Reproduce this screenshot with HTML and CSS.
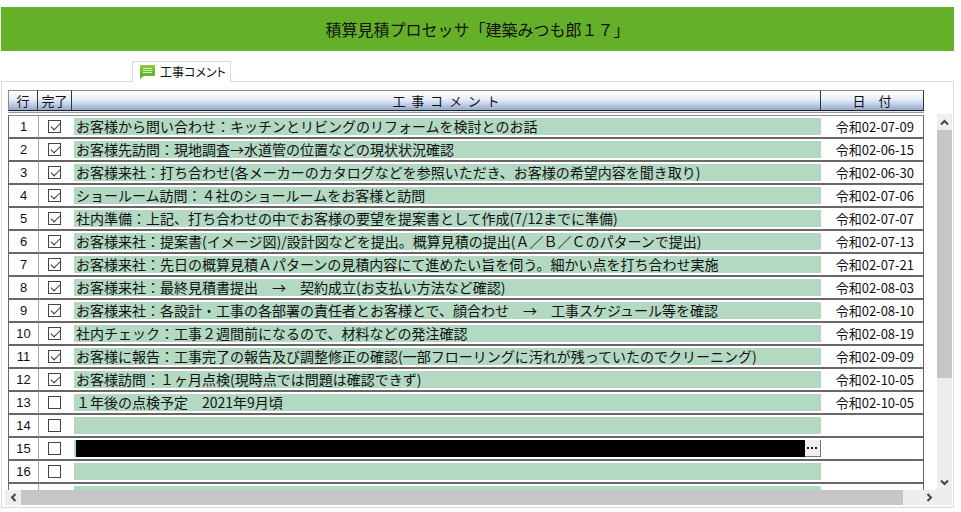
FILE: index.html
```html
<!DOCTYPE html>
<html lang="ja">
<head>
<meta charset="UTF-8">
<meta name="viewport" content="width=device-width, initial-scale=1.0">
<title>積算見積プロセッサ「建築みつも郎１７」</title>
<link rel="stylesheet" href="styles.css">
</head>
<body>
<h1 class="banner">積算見積プロセッサ「建築みつも郎１７」</h1>

<div class="tabs">
  <button type="button" class="tab">
    <svg class="tab-icon" width="16" height="16" viewBox="0 0 16 16" aria-hidden="true">
      <defs>
        <linearGradient id="bubble" x1="0" y1="0" x2="0" y2="1">
          <stop offset="0" stop-color="#8ccb3c"/>
          <stop offset="1" stop-color="#4fae2c"/>
        </linearGradient>
      </defs>
      <path d="M1 1h15v11H5L1 15z" fill="url(#bubble)"/>
      <path d="M4 4.500h9M4 6.500h9M4 8.500h9" stroke="#d4efb4" stroke-width="1"/>
    </svg>
    <span>工事コメント</span>
  </button>
</div>

<main class="panel">
  <div class="view">
    <table class="grid">
      <colgroup>
        <col class="col-no">
        <col class="col-done">
        <col>
        <col class="col-date">
      </colgroup>
      <thead>
        <tr>
          <th>行</th>
          <th>完了</th>
          <th>工&nbsp;&nbsp;事&nbsp;&nbsp;コ&nbsp;&nbsp;メ&nbsp;&nbsp;ン&nbsp;&nbsp;ト</th>
          <th>日　付</th>
        </tr>
      </thead>
      <tbody>
        <tr>
          <td class="no">1</td>
          <td class="done"><input type="checkbox" aria-label="1 完了" checked></td>
          <td class="comment"><div class="text">お客様から問い合わせ：キッチンとリビングのリフォームを検討とのお話</div></td>
          <td class="date">令和02-07-09</td>
        </tr>
        <tr>
          <td class="no">2</td>
          <td class="done"><input type="checkbox" aria-label="2 完了" checked></td>
          <td class="comment"><div class="text">お客様先訪問：現地調査→水道管の位置などの現状状況確認</div></td>
          <td class="date">令和02-06-15</td>
        </tr>
        <tr>
          <td class="no">3</td>
          <td class="done"><input type="checkbox" aria-label="3 完了" checked></td>
          <td class="comment"><div class="text">お客様来社：打ち合わせ(各メーカーのカタログなどを参照いただき、お客様の希望内容を聞き取り)</div></td>
          <td class="date">令和02-06-30</td>
        </tr>
        <tr>
          <td class="no">4</td>
          <td class="done"><input type="checkbox" aria-label="4 完了" checked></td>
          <td class="comment"><div class="text">ショールーム訪問：４社のショールームをお客様と訪問</div></td>
          <td class="date">令和02-07-06</td>
        </tr>
        <tr>
          <td class="no">5</td>
          <td class="done"><input type="checkbox" aria-label="5 完了" checked></td>
          <td class="comment"><div class="text">社内準備：上記、打ち合わせの中でお客様の要望を提案書として作成(7/12までに準備)</div></td>
          <td class="date">令和02-07-07</td>
        </tr>
        <tr>
          <td class="no">6</td>
          <td class="done"><input type="checkbox" aria-label="6 完了" checked></td>
          <td class="comment"><div class="text">お客様来社：提案書(イメージ図)/設計図などを提出。概算見積の提出(Ａ／Ｂ／Ｃのパターンで提出)</div></td>
          <td class="date">令和02-07-13</td>
        </tr>
        <tr>
          <td class="no">7</td>
          <td class="done"><input type="checkbox" aria-label="7 完了" checked></td>
          <td class="comment"><div class="text">お客様来社：先日の概算見積Ａパターンの見積内容にて進めたい旨を伺う。細かい点を打ち合わせ実施</div></td>
          <td class="date">令和02-07-21</td>
        </tr>
        <tr>
          <td class="no">8</td>
          <td class="done"><input type="checkbox" aria-label="8 完了" checked></td>
          <td class="comment"><div class="text">お客様来社：最終見積書提出　→　契約成立(お支払い方法など確認)</div></td>
          <td class="date">令和02-08-03</td>
        </tr>
        <tr>
          <td class="no">9</td>
          <td class="done"><input type="checkbox" aria-label="9 完了" checked></td>
          <td class="comment"><div class="text">お客様来社：各設計・工事の各部署の責任者とお客様とで、顔合わせ　→　工事スケジュール等を確認</div></td>
          <td class="date">令和02-08-10</td>
        </tr>
        <tr>
          <td class="no">10</td>
          <td class="done"><input type="checkbox" aria-label="10 完了" checked></td>
          <td class="comment"><div class="text">社内チェック：工事２週間前になるので、材料などの発注確認</div></td>
          <td class="date">令和02-08-19</td>
        </tr>
        <tr>
          <td class="no">11</td>
          <td class="done"><input type="checkbox" aria-label="11 完了" checked></td>
          <td class="comment"><div class="text">お客様に報告：工事完了の報告及び調整修正の確認(一部フローリングに汚れが残っていたのでクリーニング)</div></td>
          <td class="date">令和02-09-09</td>
        </tr>
        <tr>
          <td class="no">12</td>
          <td class="done"><input type="checkbox" aria-label="12 完了" checked></td>
          <td class="comment"><div class="text">お客様訪問：１ヶ月点検(現時点では問題は確認できず)</div></td>
          <td class="date">令和02-10-05</td>
        </tr>
        <tr>
          <td class="no">13</td>
          <td class="done"><input type="checkbox" aria-label="13 完了"></td>
          <td class="comment"><div class="text">１年後の点検予定　2021年9月頃</div></td>
          <td class="date">令和02-10-05</td>
        </tr>
        <tr>
          <td class="no">14</td>
          <td class="done"><input type="checkbox" aria-label="14 完了"></td>
          <td class="comment"><div class="text"></div></td>
          <td class="date"></td>
        </tr>
        <tr>
          <td class="no">15</td>
          <td class="done"><input type="checkbox" aria-label="15 完了"></td>
          <td class="comment">
            <div class="text editing">
              <input type="text" class="edit" aria-label="15 工事コメント">
              <button type="button" class="more" aria-label="参照">
                <svg width="11" height="3" viewBox="0 0 11 3" aria-hidden="true"><path d="M0 0h2v2H0zM4 0h2v2H4zM8 0h2v2H8z" fill="#111"/></svg>
              </button>
            </div>
          </td>
          <td class="date"></td>
        </tr>
        <tr>
          <td class="no">16</td>
          <td class="done"><input type="checkbox" aria-label="16 完了"></td>
          <td class="comment"><div class="text"></div></td>
          <td class="date"></td>
        </tr>
        <tr>
          <td class="no"></td>
          <td class="done"></td>
          <td class="comment"><div class="text"></div></td>
          <td class="date"></td>
        </tr>
      </tbody>
    </table>
  </div>

  <div class="vbar">
    <button type="button" class="arrow" aria-label="上へ">
      <svg width="9" height="7" viewBox="0 0 9 7"><path d="M1 5.500l3.500-3.500L8 5.500"/></svg>
    </button>
    <div class="vtrack"><div class="vthumb"></div></div>
    <button type="button" class="arrow" aria-label="下へ">
      <svg width="9" height="7" viewBox="0 0 9 7"><path d="M1 1.500l3.500 3.500L8 1.500"/></svg>
    </button>
  </div>

  <div class="hbar">
    <button type="button" class="arrow" aria-label="左へ">
      <svg width="7" height="9" viewBox="0 0 7 9"><path d="M5.500 1L2 4.500 5.500 8"/></svg>
    </button>
    <div class="htrack"><div class="hthumb"></div></div>
    <button type="button" class="arrow" aria-label="右へ">
      <svg width="7" height="9" viewBox="0 0 7 9"><path d="M1.500 1L5 4.500 1.500 8"/></svg>
    </button>
  </div>
</main>
</body>
</html>
```

FILE: styles.css
```css
* {
  box-sizing: border-box;
}
body {
  display: flex;
  flex-direction: column;
  height: 100vh;
  margin: 0;
  padding: 7px 7px 4px 1px;
  background-color: #fff;
  color: #111;
  font-family: "Noto Sans CJK JP", sans-serif;
  font-size: 14px;
}
button {
  padding: 0;
  border: none;
  color: inherit;
  font-family: inherit;
}

/* title and tab */
.banner {
  flex: none;
  margin: 0;
  background-color: #64b028;
  font-size: 16px;
  font-weight: normal;
  line-height: 44px;
  text-align: center;
}
.tabs {
  flex: none;
  padding: 10px 0 0 131px;
}
.tab {
  position: relative;
  display: flex;
  align-items: center;
  gap: 5px;
  height: 21px;
  margin-bottom: -1px;
  padding: 0 4px 0 6px;
  border: 1px solid #d9d9d9;
  border-bottom: none;
  background-color: #fff;
  font-size: 12px;
  line-height: 18px;
  font-feature-settings: "palt";
}

/* sheet */
.panel {
  flex: 1;
  display: grid;
  grid-template-columns: 1fr 15px;
  grid-template-rows: 1fr 15px;
  min-height: 0;
  padding: 8px 1px 2px 3px;
  border: 1px solid #d9d9d9;
}
.view {
  min-width: 0;
  min-height: 0;
  padding: 0 13px 0 3px;
  overflow: hidden;
}
.grid {
  width: 100%;
  border-collapse: separate;
  border-spacing: 0;
  table-layout: fixed;
}
.col-no {
  width: 30px;
}
.col-done {
  width: 34px;
}
.col-date {
  width: 103px;
}
th {
  height: 21px;
  padding: 0;
  border-top: 1px solid #8c8c8c;
  border-right: 1px solid #333;
  border-bottom: 1px solid #222;
  background-image: linear-gradient(#fff, #e6edf8 45%, #92a9d0);
  box-shadow: 0 1px 0 #e4e4e4, 0 2px 0 #999;
  font-size: 13px;
  font-weight: normal;
  line-height: 19px;
  white-space: nowrap;
}
th:first-child {
  border-left: 1px solid #8c8c8c;
}
tbody::before {
  content: "";
  display: table-row;
  height: 4px;
}
td {
  height: 23px;
  padding: 0;
  border-bottom: 2px solid #6a6668;
  line-height: 17px;
  white-space: nowrap;
}
tbody tr:first-child td {
  height: 24px;
  border-top: 1px solid #8c8c8c;
}
.no {
  border-left: 1px solid #6a6668;
  font-family: "Liberation Sans", Arial, sans-serif;
  font-size: 13px;
  text-align: center;
}
.done {
  border-left: 1px solid #aaa;
  text-align: center;
}
.done input {
  appearance: none;
  display: block;
  width: 13px;
  height: 13px;
  margin: 0 auto 0 9px;
  border: 1px solid #444;
  background-color: #fff;
}
.done input:checked::after {
  content: "";
  display: block;
  width: 8px;
  height: 4px;
  margin: 2px 0 0 2px;
  border-left: 1px solid #333;
  border-bottom: 1px solid #333;
  transform: rotate(-45deg);
}
.comment {
  padding-left: 2px;
}
.text {
  height: 17px;
  padding-left: 2px;
  background-color: #b3d9c3;
  line-height: 16px;
}
.date {
  padding-right: 9px;
  border-right: 1px solid #6a6668;
  font-size: 13px;
  text-align: right;
}
.editing {
  display: flex;
}
.edit {
  flex: 1;
  min-width: 0;
  height: 17px;
  padding: 0 3px;
  border: none;
  outline: none;
  background-color: #000;
  color: #fff;
  font: inherit;
}
.more {
  display: flex;
  align-items: center;
  justify-content: center;
  width: 16px;
  height: 17px;
  border-right: 1px solid #777;
  border-bottom: 1px solid #777;
  background-color: #f0f0f0;
}

/* scroll bars */
.vbar {
  display: flex;
  flex-direction: column;
  margin-top: 24px;
  background-color: #eee;
}
.hbar {
  grid-column: 1 / 3;
  display: flex;
  padding-right: 15px;
  background-color: #eee;
}
.arrow {
  flex: none;
  display: flex;
  align-items: center;
  justify-content: center;
  width: 16px;
  height: 15px;
  background-color: transparent;
}
.vbar .arrow {
  width: 15px;
  height: 16px;
}
.arrow path {
  fill: none;
  stroke: #444;
  stroke-width: 2;
}
.vtrack,
.htrack {
  flex: 1;
}
.vthumb {
  height: 72%;
  background-color: #c6c6c6;
}
.hthumb {
  width: 98%;
  height: 100%;
  background-color: #c6c6c6;
}
```
